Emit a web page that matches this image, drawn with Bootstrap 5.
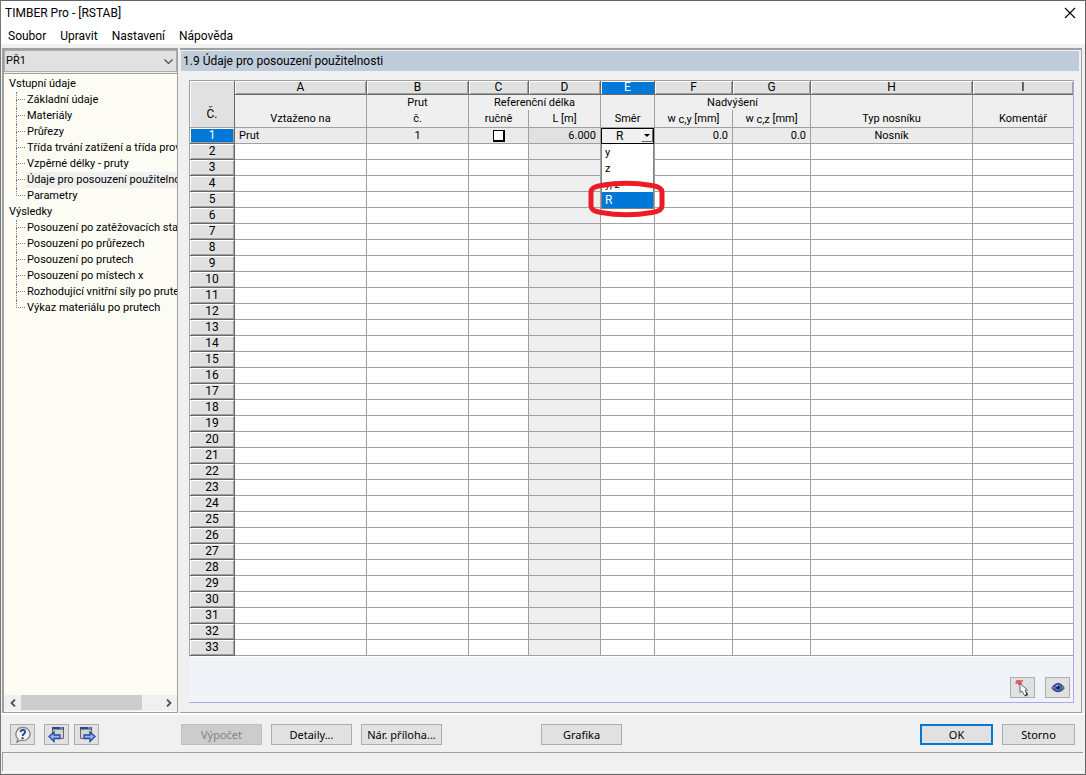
<!DOCTYPE html>
<html lang="cs">
<head>
<meta charset="utf-8">
<meta name="viewport" content="width=device-width, initial-scale=1">
<title>TIMBER Pro - [RSTAB]</title>
<link href="https://cdn.jsdelivr.net/npm/bootstrap@5.3.0/dist/css/bootstrap.min.css" rel="stylesheet">
<style>
:root { --face: #f0f0f0; --line: #a0a0a0; --btn: #e1e1e1; --accent: #0078d7; }
body { background: var(--face); font: 11px/16px Roboto, sans-serif; color: #000; }
.app-window { border: 1px solid #646464; border-left-color: #787878; }
.title-bar { height: 24px; font: 12px/24px Roboto, sans-serif; padding: 0 9px 0 4px; }
.close-btn { width: 12px; height: 12px; }
.menu-bar { height: 19px; padding: 0 7px; gap: 14px; font: 12px/22px Roboto, sans-serif; }
.menu-bar a { color: #000; text-decoration: none; }
.work-area { padding: 0 3px 0 1px; border-top: 4px solid var(--face); }
.sidebar { width: 176px; border: 1px solid var(--line); border-top-width: 2px; border-left-width: 2px; background: #fcfcf4; padding-bottom: 1px; }
.case-select { height: 22px; border: 1px solid #adadad; border-radius: 0; background: var(--btn); font: 11px/20px Roboto, sans-serif; padding: 0 1px; appearance: none; }
.case-wrap { border-bottom: 1px solid var(--line); padding-bottom: 1px; margin-bottom: 2px; background: var(--face); }
.case-wrap svg { right: 4px; top: 9px; }
.tree { white-space: nowrap; }
.tree ul { padding-left: 22px; }
.tree > li > a { padding-left: 5px; }
.tree a { color: #000; text-decoration: none; display: block; padding-left: 1px; }
.tree a.active { background: var(--face); }
.tree ul li::before { content: ""; position: absolute; left: -10px; top: 0; width: 9px; height: 8px; border-left: 1px dotted #808080; border-bottom: 1px dotted #808080; }
.tree ul li:not(:last-child)::after { content: ""; position: absolute; left: -10px; top: 8px; height: 8px; border-left: 1px dotted #808080; }
.scroll-x { height: 16px; background: var(--face); }
.scroll-thumb { width: 121px; height: 15px; background: #cdcdcd; }
.scroll-btn { width: 17px; border: 0; background: none; padding: 0; line-height: 0; }
.main-panel { border: 1px solid var(--line); border-top-width: 2px; border-left: 0; min-width: 0; padding: 1px 1px 9px 0; margin-left: 2px; }
.panel-title { height: 20px; font: 12px/20px Roboto, sans-serif; background: #bfcddb; padding-left: 2px; margin: 0 1px 9px 1px; }
.grid-panel { margin: 0 6px 0 9px; border-right: 1px solid #a8a8f0; border-bottom: 1px solid #a8a8f0; background: #f0f3f8; }
.grid { table-layout: fixed; width: 100%; border-collapse: separate; border-spacing: 0; font: 11px/15px Roboto, sans-serif; background: #fff; border-top: 1px solid var(--line); border-left: 1px solid var(--line); border-bottom: 1px solid #fff; }
.grid th, .grid td { height: 16px; padding: 0 4px; font-weight: 400; text-align: center; border-right: 1px solid var(--line); border-bottom: 1px solid var(--line); white-space: nowrap; vertical-align: middle; line-height: 15px; }
.grid tr > :last-child { border-right: 0; }
.grid thead th { background: #efefef; }
.grid thead .letters th { height: 14px; font-size: 12px; line-height: 13px; background: var(--btn); border-color: #696969; box-shadow: inset 1px 1px #fff, inset -1px -1px var(--line); }
.grid thead .groups th { border-bottom: 0; height: 15px; }
.grid thead .names th { height: 18px; }
.grid .letters th.corner, .grid .letters th.sel { box-shadow: inset 1px 1px #fff; }
.grid .letters th.corner { padding-top: 21px; border-bottom-color: var(--line); }
.grid .letters th.sel { background: var(--accent); color: #fff; }
.grid tbody th { font-size: 12px; background: var(--btn); border-color: #696969; box-shadow: inset 1px 1px #fff, inset -1px -1px var(--line); }
.grid tbody tr.current > * { background: #ebebeb; }
.grid tbody tr.current > th { background: var(--accent); color: #fff; }
.grid tbody td:nth-child(5) { background: #efefef; }
.grid tbody tr.current > td:nth-child(5) { background: #e1e1e1; }
.sub-index { font-size: 11px; line-height: 8px; position: relative; top: 1px; }
.manual-check { appearance: none; width: 12px; height: 12px; margin: 0; border: 1px solid #000; box-shadow: inset -1px -1px #000; background: #fff; display: block; }
.grid td.dir-cell { padding: 0; vertical-align: top; }
.dir-box { height: 15px; }
.dir-select { width: 100%; height: 16px; border: 1px solid #000; background: var(--face); appearance: none; padding: 0 0 0 14px; font: 12px/14px Roboto, sans-serif; display: block; border-radius: 0; }
.dir-arrow { right: 1px; top: 1px; width: 12px; height: 13px; background: var(--face); border: 1px solid #fff; border-right-color: #696969; border-bottom-color: #696969; pointer-events: none; line-height: 0; }
.dir-list { top: 16px; left: 0; right: 0; background: #fff; border: 1px solid #808080; border-top: 0; z-index: 2; }
.dir-list button { display: block; width: 100%; border: 0; background: #fff; text-align: left; padding: 1px 3px 0; font: 11px/15px Roboto, sans-serif; }
.dir-list button.chosen { background: var(--accent); color: #fff; font-size: 12px; }
.marker { left: -13px; top: 52px; z-index: 3; pointer-events: none; }
.grid-tools { padding: 0 3px 4px; gap: 10px; }
.ui-btn { height: 21px; border: 1px solid #adadad; background: var(--btn); font: 11px/19px "Noto Sans", sans-serif; padding: 0; width: 81px; color: #000; }
.ui-btn:disabled { background: #ccc; color: #838383; border-color: #bfbfbf; }
.ui-btn.icon-only { width: 25px; line-height: 0; }
.ui-btn.narrow { width: 73px; }
.ui-btn.primary { border: 2px solid var(--accent); line-height: 17px; }
.footer-bar { border-top: 2px solid #fff; padding: 9px 10px 7px 9px; }
.nav-actions { gap: 5px; margin-left: 9px; }
.main-actions { margin-left: 82px; gap: 9px; }
.main-actions .graphic { margin-left: 90px; }
.dialog-actions { gap: 9px; }
.status-bar { height: 20px; border-top: 1px solid var(--line); border-left: 1px solid var(--line); border-bottom: 1px solid #fff; margin: 0 2px 2px 1px; }
</style>
<script src="https://cdn.jsdelivr.net/npm/bootstrap@5.3.0/dist/js/bootstrap.bundle.min.js"></script>
</head>
<body>
<div class="app-window d-flex flex-column min-vh-100">
  <header class="bg-white">
    <div class="title-bar d-flex align-items-center justify-content-between">
      <span>TIMBER Pro - [RSTAB]</span>
      <button class="close-btn btn p-0 border-0 d-flex" aria-label="Zavřít"><svg width="12" height="12" viewBox="0 0 12 12"><path d="M1 1l10 10M11 1L1 11" stroke="#000" stroke-width="1.1"/></svg></button>
    </div>
    <nav class="menu-bar d-flex"><a href="#">Soubor</a><a href="#">Upravit</a><a href="#">Nastavení</a><a href="#">Nápověda</a></nav>
  </header>

  <div class="work-area d-flex flex-fill">
    <aside class="sidebar d-flex flex-column flex-shrink-0">
      <div class="case-wrap position-relative">
        <select class="case-select w-100 d-block" aria-label="Případ"><option>PŘ1</option></select>
        <svg class="position-absolute" width="9" height="6" viewBox="0 0 9 6"><path d="M.5.5l4 4 4-4" fill="none" stroke="#444" stroke-width="1.1"/></svg>
      </div>
      <ul class="tree list-unstyled mb-0 overflow-hidden flex-fill">
        <li><a href="#">Vstupní údaje</a>
          <ul class="list-unstyled">
            <li class="position-relative"><a href="#">Základní údaje</a></li>
            <li class="position-relative"><a href="#">Materiály</a></li>
            <li class="position-relative"><a href="#">Průřezy</a></li>
            <li class="position-relative"><a href="#">Třída trvání zatížení a třída provozu</a></li>
            <li class="position-relative"><a href="#">Vzpěrné délky - pruty</a></li>
            <li class="position-relative"><a href="#" class="active">Údaje pro posouzení použitelnosti</a></li>
            <li class="position-relative"><a href="#">Parametry</a></li>
          </ul></li>
        <li><a href="#">Výsledky</a>
          <ul class="list-unstyled">
            <li class="position-relative"><a href="#">Posouzení po zatěžovacích stavech</a></li>
            <li class="position-relative"><a href="#">Posouzení po průřezech</a></li>
            <li class="position-relative"><a href="#">Posouzení po prutech</a></li>
            <li class="position-relative"><a href="#">Posouzení po místech x</a></li>
            <li class="position-relative"><a href="#">Rozhodující vnitřní síly po prutech</a></li>
            <li class="position-relative"><a href="#">Výkaz materiálu po prutech</a></li>
          </ul></li>
      </ul>
      <div class="scroll-x d-flex">
        <button class="scroll-btn" aria-label="Doleva"><svg width="6" height="8" viewBox="0 0 6 8"><path d="M5 .5L1.500 4 5 7.500" fill="none" stroke="#505050" stroke-width="1.8"/></svg></button>
        <div class="scroll-thumb"></div>
        <button class="scroll-btn ms-auto" aria-label="Doprava"><svg width="6" height="8" viewBox="0 0 6 8"><path d="M1 .5L4.500 4 1 7.500" fill="none" stroke="#505050" stroke-width="1.8"/></svg></button>
      </div>
    </aside>

    <main class="main-panel d-flex flex-column flex-fill">
      <h1 class="panel-title">1.9 Údaje pro posouzení použitelnosti</h1>
      <div class="grid-panel d-flex flex-column flex-fill">
        <table class="grid">
          <colgroup><col style="width:45px"><col style="width:132px"><col style="width:102px"><col style="width:60px"><col style="width:72px"><col style="width:54px"><col style="width:78px"><col style="width:78px"><col style="width:162px"><col></colgroup>
          <thead>
            <tr class="letters"><th class="corner" rowspan="3">Č.</th><th>A</th><th>B</th><th>C</th><th>D</th><th class="sel">E</th><th>F</th><th>G</th><th>H</th><th>I</th></tr>
            <tr class="groups"><th></th><th>Prut</th><th colspan="2">Referenční délka</th><th></th><th colspan="2">Nadvýšení</th><th></th><th></th></tr>
            <tr class="names"><th>Vztaženo na</th><th>č.</th><th>ručně</th><th>L [m]</th><th>Směr</th><th>w <span class="sub-index">c,y</span> [mm]</th><th>w <span class="sub-index">c,z</span> [mm]</th><th>Typ nosníku</th><th>Komentář</th></tr>
          </thead>
          <tbody id="rows">
            <tr class="current"><th>1</th><td class="text-start">Prut</td><td>1</td>
              <td><input type="checkbox" class="manual-check mx-auto" aria-label="ručně"></td>
              <td class="text-end">6.000</td>
              <td class="dir-cell"><div class="dir-box position-relative">
                <select class="dir-select" aria-label="Směr"><option>R</option></select>
                <span class="dir-arrow position-absolute"><svg width="10" height="10" viewBox="0 0 10 10"><path d="M2 4h6L5 7z"/></svg></span>
                <div class="dir-list position-absolute"><button>y</button><button>z</button><button>y, z</button><button class="chosen">R</button></div>
                <svg class="marker position-absolute" width="78" height="38" viewBox="0 0 78 38"><path d="M3 12Q3 7 13 5.500Q38 1 64 5.500Q74 7 74 12V26Q74 31 64 32.500Q38 37 13 32.500Q3 31 3 26Z" fill="none" stroke="#ed1c24" stroke-width="5"/></svg>
              </div></td>
              <td class="text-end">0.0</td><td class="text-end">0.0</td><td>Nosník</td><td></td></tr>
          </tbody>
        </table>
        <div class="grid-tools d-flex justify-content-end align-items-end flex-fill">
          <button class="ui-btn icon-only" aria-label="Vybrat v grafice"><svg width="18" height="18" viewBox="0 0 18 18"><path d="M2 1.500l3 1.500 4-1.500M1.500 4.500L5 3l3 2M5 1v5" stroke="#e0565c" stroke-width="1.8" fill="none"/><path d="M6 4.500v9l2-1.500 2.500 4.500 2.500-1-2-4.500h2.500z" fill="#fff" stroke="#666"/><path d="M12 13l1.500 2.500-2.500 1.500" fill="none" stroke="#333" stroke-width="1.2"/></svg></button>
          <button class="ui-btn icon-only" aria-label="Zobrazit"><svg width="14" height="12" viewBox="0 0 14 12"><path d="M1 6Q7-2.500 13 6Q7 13 1 6Z" fill="#fff" stroke="#555" stroke-width="1.3"/><circle cx="7" cy="5.500" r="4" fill="#4a70dc" stroke="#203070" stroke-width=".7"/><circle cx="7" cy="5.500" r="1.700" fill="#0a1030"/><circle cx="6" cy="4" r=".8" fill="#dfe8ff"/></svg></button>
        </div>
      </div>
    </main>
  </div>

  <footer>
    <div class="footer-bar d-flex">
      <button class="ui-btn icon-only" aria-label="Nápověda"><svg width="18" height="18" viewBox="0 0 18 18"><path d="M9 1.500a7 6.500 0 1 1-2 12.700L3 16l1-3A6.700 6.700 0 0 1 9 1.500z" fill="#f4f4f4" stroke="#888" stroke-width="1.4"/><path d="M6.500 6Q7 3.800 9.200 4Q11.500 4.300 11 6.300Q10.700 7.500 9.500 8.200Q8.800 8.800 8.800 10" fill="none" stroke="#28409c" stroke-width="1.9"/><circle cx="8.600" cy="12.200" r="1.100" fill="#28409c"/></svg></button>
      <div class="nav-actions d-flex">
        <button class="ui-btn icon-only" aria-label="Předchozí"><svg width="18" height="18" viewBox="0 0 18 18"><path d="M4.500 1.500h11v11h-11z" fill="#d4d4d4" stroke="#666"/><path d="M4 1h12v2.500H4z" fill="#35457c"/><path d="M12 1.500h3v1h-3z" fill="#aab8e8"/><path d="M1 10.500l5-4.500v3h6v3.500H6v3z" fill="#8fb4f6" stroke="#2747a0" stroke-width="1.3"/></svg></button>
        <button class="ui-btn icon-only" aria-label="Další"><svg width="18" height="18" viewBox="0 0 18 18"><path d="M2.500 1.500h11v11h-11z" fill="#d4d4d4" stroke="#666"/><path d="M2 1h12v2.500H2z" fill="#35457c"/><path d="M10 1.500h3v1h-3z" fill="#aab8e8"/><path d="M17 10.500l-5-4.500v3H6v3.500h6v3z" fill="#8fb4f6" stroke="#2747a0" stroke-width="1.3"/></svg></button>
      </div>
      <div class="main-actions d-flex"><button class="ui-btn" disabled>Výpočet</button><button class="ui-btn">Detaily...</button><button class="ui-btn">Nár. příloha...</button><button class="ui-btn graphic">Grafika</button></div>
      <div class="d-flex ms-auto dialog-actions"><button class="ui-btn narrow primary">OK</button><button class="ui-btn narrow">Storno</button></div>
    </div>
    <div class="status-bar"></div>
  </footer>
</div>
<script>
const rows = document.getElementById('rows');
for (let i = 2; i <= 33; i++) {
  rows.insertAdjacentHTML('beforeend', `<tr><th>${i}</th>${'<td></td>'.repeat(9)}</tr>`);
}
</script>
</body>
</html>
